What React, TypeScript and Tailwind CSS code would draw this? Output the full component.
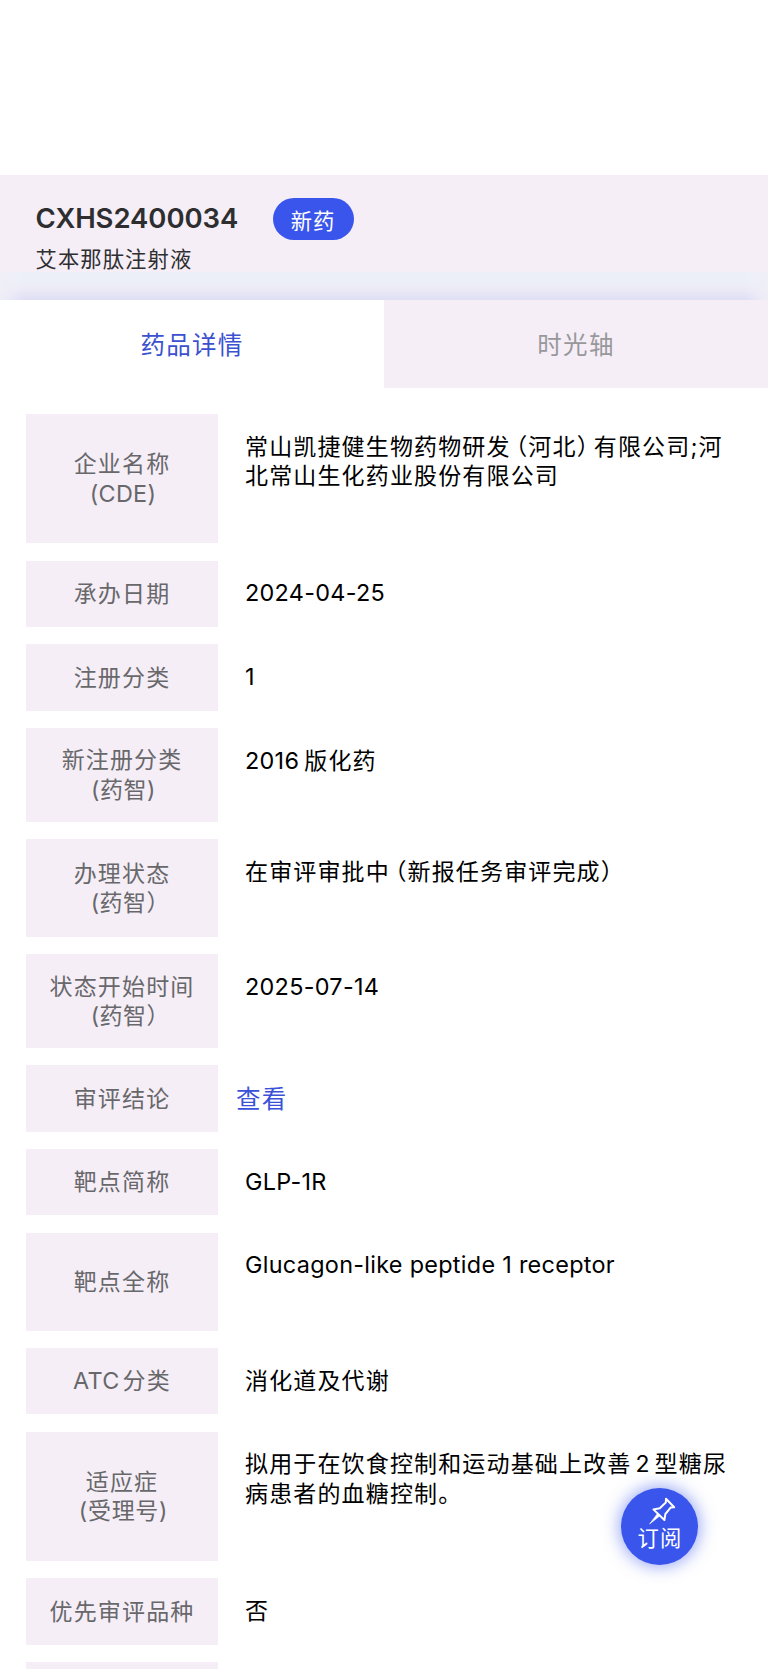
import React from "react";

type Row = {
  id: number;
  height: string;
  label: React.ReactNode;
  value?: React.ReactNode;
  link?: string;
};

// Latin letters and digits sit tighter than the Chinese glyphs
const Latin = ({ children }: { children: React.ReactNode }) => (
  <span className="text-[23.4px] leading-none tracking-[0.3px]">{children}</span>
);

// Full-width brackets set at half width, with the gap on the outer side
const Open = () => (
  <span className="ml-[5px] [font-feature-settings:'halt']">（</span>
);

const Close = () => (
  <span className="mr-[4.5px] [font-feature-settings:'halt']">）</span>
);

const rows: Row[] = [
  {
    id: 1,
    height: "h-[129.2px]",
    label: (
      <>
        企业名称
        <br />
        <span className="pl-0.5">
          <Latin>(CDE)</Latin>
        </span>
      </>
    ),
    value: (
      <>
        常山凯捷健生物药物研发
        <Open />
        河北
        <Close />
        有限公司;河
        <br />
        北常山生化药业股份有限公司
      </>
    ),
  },
  { id: 2, height: "h-[66.2px]", label: "承办日期", value: <Latin>2024-04-25</Latin> },
  { id: 3, height: "h-[66.2px]", label: "注册分类", value: <Latin>1</Latin> },
  {
    id: 4,
    height: "h-[93.5px]",
    label: (
      <>
        新注册分类
        <br />
        <span className="pl-[3px] tracking-[0.5px]">(药智)</span>
      </>
    ),
    value: (
      <>
        <Latin>2016</Latin>
        <span className="ml-[5px]">版化药</span>
      </>
    ),
  },
  {
    id: 5,
    height: "h-[97.7px]",
    label: (
      <>
        办理状态
        <br />
        <span className="pl-1.5 tracking-[0.5px]">(药智</span>
        <span className="[font-feature-settings:'halt']">）</span>
      </>
    ),
    value: (
      <>
        在审评审批中
        <Open />
        新报任务审评完成
        <Close />
      </>
    ),
  },
  {
    id: 6,
    height: "h-[93.6px]",
    label: (
      <>
        状态开始时间
        <br />
        <span className="pl-1.5 tracking-[0.5px]">(药智</span>
        <span className="[font-feature-settings:'halt']">）</span>
      </>
    ),
    value: <Latin>2025-07-14</Latin>,
  },
  { id: 7, height: "h-[66.2px]", label: "审评结论", link: "查看" },
  { id: 8, height: "h-[66.2px]", label: "靶点简称", value: <Latin>GLP-1R</Latin> },
  {
    id: 9,
    height: "h-[97.8px]",
    label: "靶点全称",
    value: <Latin>Glucagon-like peptide 1 receptor</Latin>,
  },
  {
    id: 10,
    height: "h-[66.2px]",
    label: (
      <>
        <Latin>ATC</Latin>
        <span className="ml-[3px]">分类</span>
      </>
    ),
    value: "消化道及代谢",
  },
  {
    id: 11,
    height: "h-[129.2px]",
    label: (
      <>
        适应症
        <br />
        <span className="pl-[3px] tracking-[0.7px]">(受理号)</span>
      </>
    ),
    value: (
      <>
        拟用于在饮食控制和运动基础上改善<span className="mx-1">2</span>型糖尿
        <br />
        病患者的血糖控制。
      </>
    ),
  },
  { id: 12, height: "h-[66.2px]", label: "优先审评品种", value: "否" },
  { id: 13, height: "h-[66.2px]", label: "" },
];

const App = () => {
  return (
    <div className="relative h-[1669px] w-[768px] overflow-hidden bg-white pt-[175px] font-['Inter','Noto_Sans_CJK_SC',sans-serif]">
      {/* HEADER */}
      <header className="flex h-[125px] flex-col bg-[#f5eef7]">
        <div className="flex h-[97px] flex-col pl-[35.5px] pt-[23px] text-[#2e2e30]">
          <div className="flex h-[42px] items-center">
            <h1 className="w-[237px] text-[27.5px] font-semibold leading-none tracking-[-0.05px]">
              CXHS2400034
            </h1>
            <span className="flex h-[42px] w-[81px] items-center justify-center rounded-full bg-[#3955ec] pt-[5px] text-[21.3px] leading-none tracking-[1px] text-white">
              新药
            </span>
          </div>
          <p className="pt-1 text-[21.3px] leading-[30px] tracking-[1.1px]">
            艾本那肽注射液
          </p>
        </div>
        <div className="h-7 bg-[#f0eff8]">
          <div className="h-full bg-linear-to-b from-[#edeff8] from-35% via-[#ece9f6] via-65% to-[#dedff5] [mask-image:linear-gradient(to_right,transparent,black_3%,black_97%,transparent)]" />
        </div>
      </header>

      {/* TABS */}
      <nav className="grid h-[88px] grid-cols-2 text-[24.5px] tracking-[1.3px]">
        <div className="flex items-center justify-center bg-white pt-0.5 text-[#3b51cf]">
          药品详情
        </div>
        <div className="flex items-center justify-center bg-[#f5eef7] pt-0.5 text-[#98989b]">
          时光轴
        </div>
      </nav>

      {/* DETAIL ROWS */}
      <main className="flex flex-col gap-[17.5px] pl-[26px] pt-[26px] text-[23px] leading-[29.4px] tracking-[1.15px]">
        {rows.map((row) => (
          <div key={row.id} className={`flex shrink-0 ${row.height}`}>
            <div className="flex w-48 shrink-0 items-center justify-center bg-[#f5eef7] pt-0.5 text-center text-[#68686b]">
              <div>{row.label}</div>
            </div>
            {row.link ? (
              <a className="flex items-center pl-[18px] pt-0.5 text-[24.5px] text-[#3b51d8]">
                {row.link}
              </a>
            ) : (
              <div className="whitespace-nowrap pl-[27px] pt-[18.5px] text-black">
                {row.value}
              </div>
            )}
          </div>
        ))}
      </main>

      {/* SUBSCRIBE BUTTON */}
      <button className="absolute left-[621px] top-[1487.5px] flex size-[77px] flex-col items-center rounded-full bg-[#3955ec] pt-[9px] text-white shadow-[0_0_16px_2px_rgba(57,85,236,0.5)]">
        <svg
          className="ml-[5px]"
          width="28"
          height="28"
          viewBox="0 0 28 28"
          fill="none"
          stroke="white"
          strokeWidth="2"
          strokeLinejoin="round"
          strokeLinecap="round"
        >
          <path d="M18 1.8 26.2 10.2 22.6 10.6 17.4 17 16.4 23 5.4 12.4 11.8 11.2 17.8 5.6Z" />
          <path d="M9.6 16.4 1.6 27 12 18.8Z" fill="white" strokeWidth="0.6" />
        </svg>
        <span className="pl-px text-[21.3px] leading-[27px] tracking-[1.2px]">
          订阅
        </span>
      </button>
    </div>
  );
};

export default App;
